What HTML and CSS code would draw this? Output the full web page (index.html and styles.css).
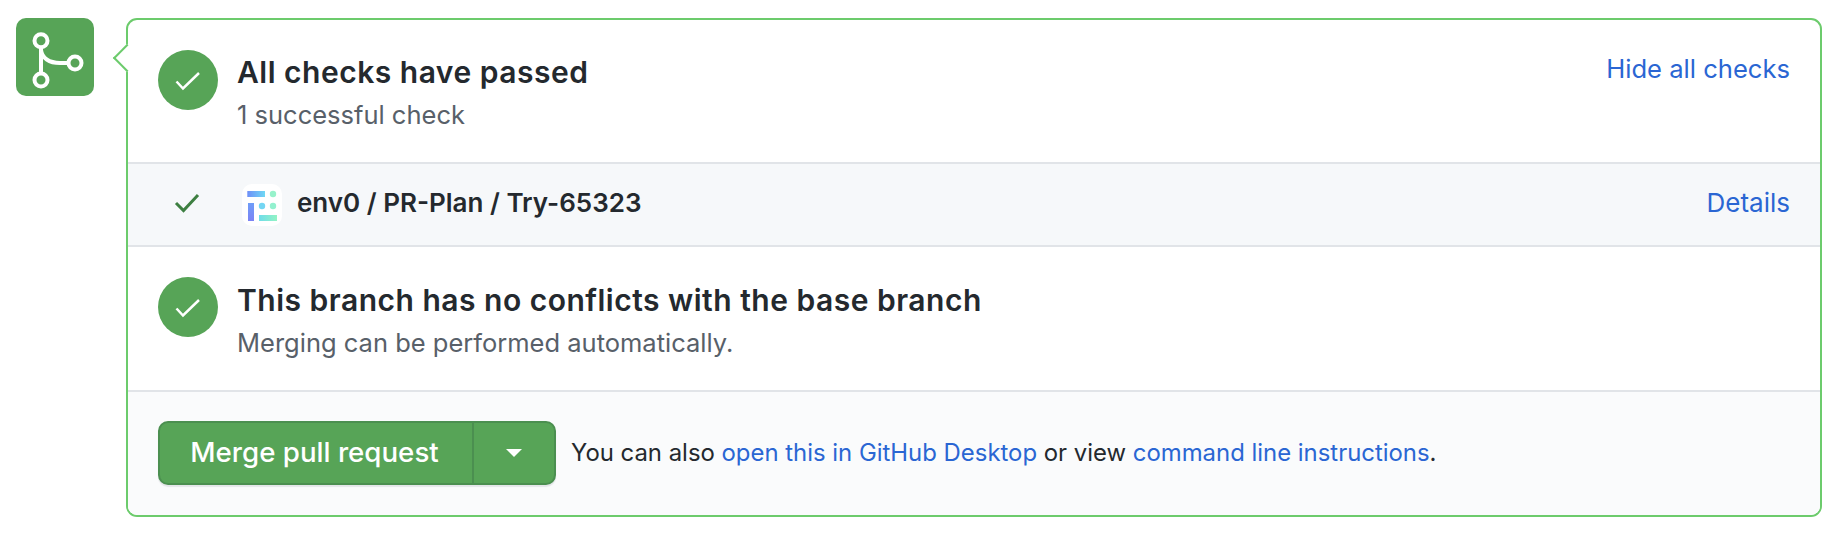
FILE: index.html
```html
<!DOCTYPE html>
<html lang="en">
<head>
<meta charset="utf-8">
<title>Merge status</title>
<link rel="stylesheet" href="styles.css">
</head>
<body>
<div class="timeline">
  <div class="merge-icon">
    <svg viewBox="0 0 78 78" width="78" height="78" fill="none" stroke="#fff" stroke-width="4">
      <circle cx="25" cy="22.700" r="6.500"/>
      <circle cx="25" cy="62" r="6.500"/>
      <circle cx="59" cy="45" r="6.500"/>
      <path d="M25 29.300V55.400M25 32c1 8 8 13 19 13h8.400"/>
    </svg>
  </div>
  <div class="box">
    <span class="caret"></span>
    <section class="row head">
      <span class="badge">
        <svg viewBox="0 0 60 60" width="60" height="60" fill="none" stroke="#fff" stroke-width="2.500"><path d="M18.500 31.500l6.500 7L41 23"/></svg>
      </span>
      <div class="body">
        <h3 class="title">All checks have passed</h3>
        <p class="sub">1 successful check</p>
      </div>
      <a class="link hide">Hide all checks</a>
    </section>
    <section class="check">
      <svg class="tick" viewBox="0 0 26 20" width="26" height="20" fill="none" stroke="#3d7f41" stroke-width="3"><path d="M2 10l7.500 7.500L24 2"/></svg>
      <span class="logo">
        <svg viewBox="0 0 40 42" width="40" height="42">
          <defs>
            <linearGradient id="g1" x1="0" x2="1" y1="0" y2="0"><stop offset="0" stop-color="#6f8ff8"/><stop offset="1" stop-color="#6fd8f4"/></linearGradient>
            <linearGradient id="g2" x1="0" x2="0" y1="0" y2="1"><stop offset="0" stop-color="#6f9df8"/><stop offset="1" stop-color="#7c83f5"/></linearGradient>
            <linearGradient id="g3" x1="0" x2="1" y1="0" y2="0"><stop offset="0" stop-color="#6fdcea"/><stop offset="1" stop-color="#92f4c4"/></linearGradient>
          </defs>
          <rect x="5.300" y="7" width="17.700" height="6" fill="url(#g1)"/>
          <circle cx="31" cy="10" r="3.200" fill="#97f2cb"/>
          <rect x="6" y="19" width="6" height="18" fill="url(#g2)"/>
          <circle cx="20" cy="22" r="3.200" fill="#74d6f3"/>
          <circle cx="31" cy="22" r="3.200" fill="#93f1cf"/>
          <rect x="17" y="31" width="18" height="6" fill="url(#g3)"/>
        </svg>
      </span>
      <strong class="check-name">env0 / PR-Plan / Try-65323</strong>
      <a class="link details">Details</a>
    </section>
    <section class="row mergeable">
      <span class="badge">
        <svg viewBox="0 0 60 60" width="60" height="60" fill="none" stroke="#fff" stroke-width="2.500"><path d="M18.500 31.500l6.500 7L41 23"/></svg>
      </span>
      <div class="body">
        <h3 class="title">This branch has no conflicts with the base branch</h3>
        <p class="sub">Merging can be performed automatically.</p>
      </div>
    </section>
    <footer class="actions">
      <div class="btn-group">
        <button class="btn main">Merge pull request</button>
        <button class="btn more" aria-label="Select merge method"><span class="arrow"></span></button>
      </div>
      <p class="alt">You can also <a class="link">open this in GitHub Desktop</a> or view <a class="link">command line instructions</a>.</p>
    </footer>
  </div>
</div>
</body>
</html>
```
FILE: styles.css
```css
* { box-sizing: border-box; }
html, body { margin: 0; background: #fff; }
body {
  font-family: Inter, "Liberation Sans", sans-serif;
  color: #24292e;
  padding: 18px 20px 0 16px;
  height: 544px;
  overflow: hidden;
}
.timeline { display: flex; align-items: flex-start; gap: 32px; }
.merge-icon {
  flex: none;
  width: 78px;
  height: 78px;
  background: #57a457;
  border-radius: 10px;
}
.merge-icon svg { display: block; }
.box {
  position: relative;
  flex: 1;
  height: 499px;
  border: 2px solid #6ccb6c;
  border-radius: 11px;
  display: flex;
  flex-direction: column;
}
.caret {
  position: absolute;
  left: -11px;
  top: 28px;
  width: 20px;
  height: 20px;
  background: #fff;
  border-left: 2px solid #6ccb6c;
  border-bottom: 2px solid #6ccb6c;
  transform: rotate(45deg);
}
.row {
  display: flex;
  align-items: flex-start;
  padding: 30px 30px 0 30px;
}
.head { height: 142px; }
.mergeable { height: 143px; }
.badge {
  flex: none;
  width: 60px;
  height: 60px;
  border-radius: 50%;
  background: #57a457;
  margin-right: 19px;
}
.badge svg { display: block; }
.body { flex: 1; padding-top: 2px; }
.mergeable .body { padding-top: 3px; }
.title {
  margin: 0;
  font-size: 30px;
  line-height: 40px;
  font-weight: 600;
  letter-spacing: 0.5px;
}
.sub {
  margin: 5px 0 0;
  font-size: 25.500px;
  line-height: 36px;
  color: #586069;
}
.link { color: #2a66d3; }
.hide { font-size: 25.600px; line-height: 36px; margin-top: 1px; }
.check {
  height: 85px;
  flex: none;
  display: flex;
  align-items: center;
  background: #f6f8fa;
  border-top: 2px solid #e1e4e8;
  border-bottom: 2px solid #e1e4e8;
  padding: 0 30px 0 46px;
}
.tick { flex: none; margin: 0 42px 3px 0; }
.logo {
  flex: none;
  width: 40px;
  height: 42px;
  background: #fff;
  border-radius: 10px;
  margin-right: 15px;
}
.logo svg { display: block; }
.check-name { flex: 1; font-size: 26px; font-weight: 600; margin-bottom: 4px; }
.details { font-size: 26px; margin-bottom: 4px; }
.actions {
  flex: 1;
  display: flex;
  align-items: center;
  gap: 15px;
  padding: 0 30px 1px;
  background: #fafbfc;
  border-top: 2px solid #e1e4e8;
  border-radius: 0 0 9px 9px;
}
.btn-group {
  display: flex;
  flex: none;
  height: 64px;
  border: 2px solid #4b8f50;
  border-radius: 10px;
  background: #57a457;
  box-shadow: 0 2px 1px #e4e6e9;
}
.btn {
  border: 0;
  background: none;
  color: #fff;
  font: 500 27.700px Inter, "Liberation Sans", sans-serif;
  padding: 0;
}
.main { width: 312px; padding: 0 3px 2px 0; }
.more {
  width: 82px;
  border-left: 2px solid #4b8f50;
  display: flex;
  align-items: center;
  justify-content: center;
}
.arrow {
  width: 0;
  height: 0;
  border-left: 8px solid transparent;
  border-right: 8px solid transparent;
  border-top: 8px solid #fff;
}
.alt { margin: 0 0 2px; font-size: 23.900px; }
```
